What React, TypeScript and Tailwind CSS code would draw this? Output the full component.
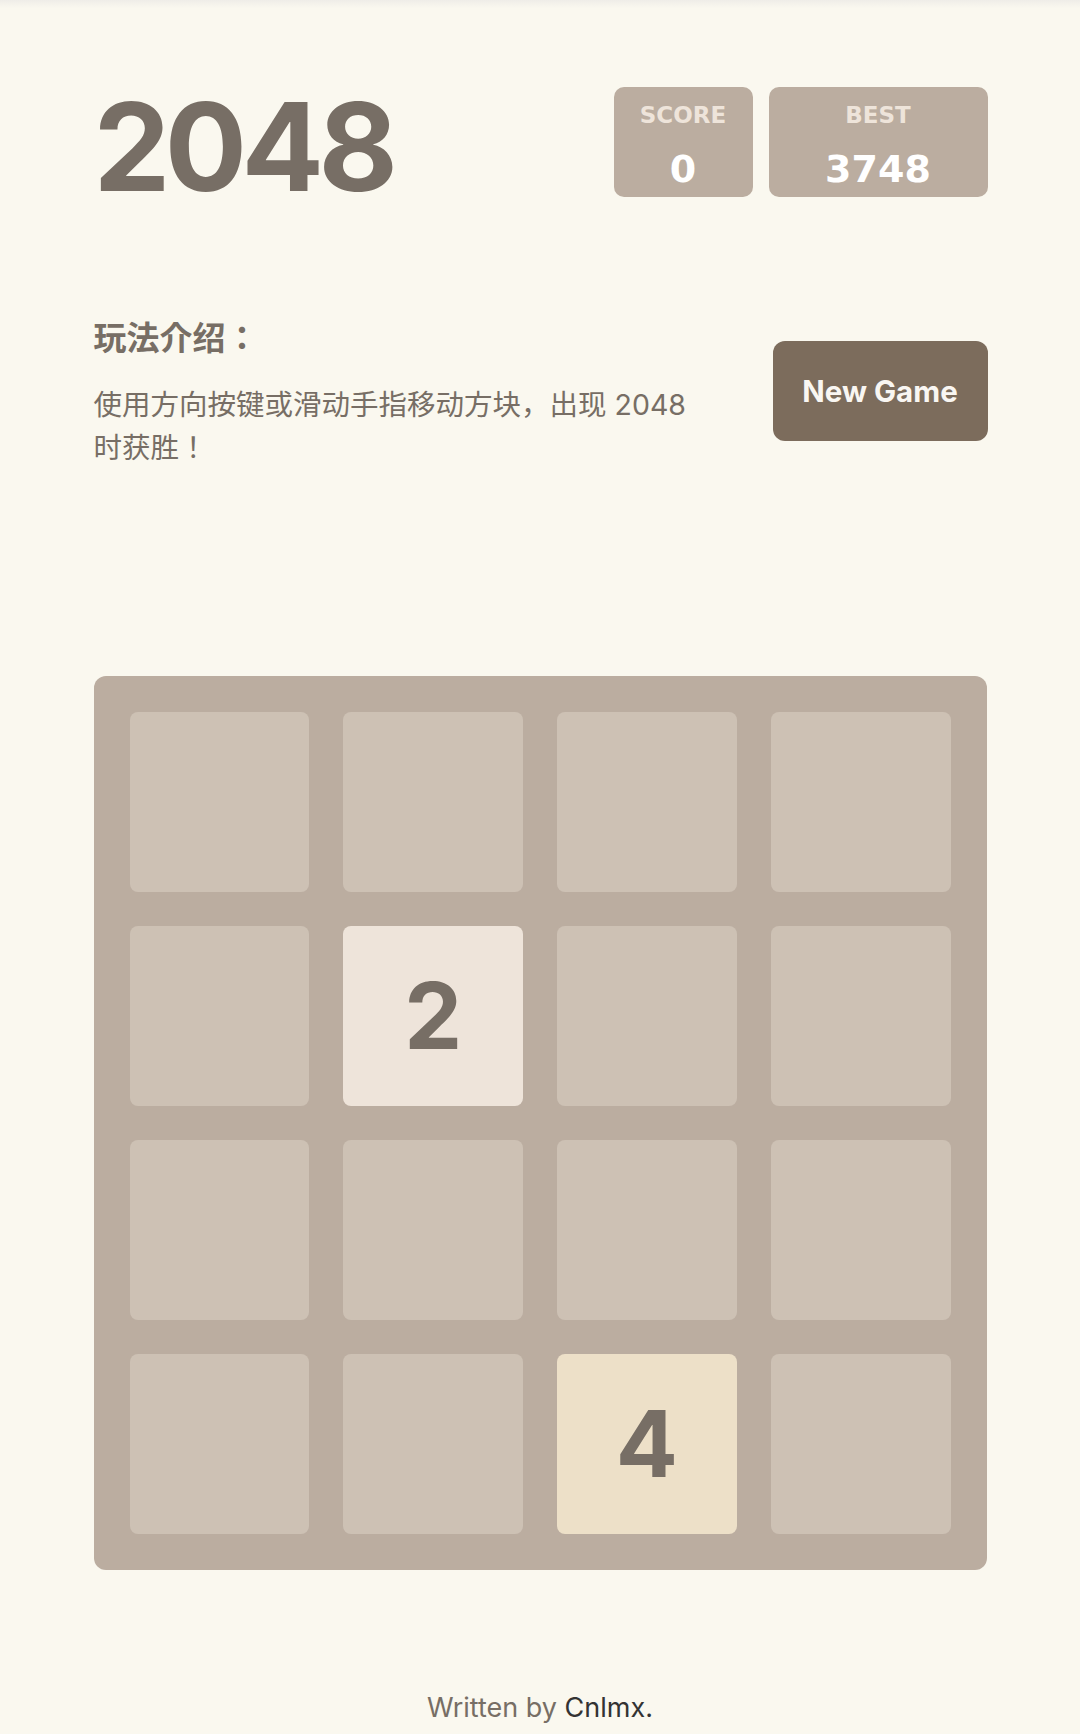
const board = [
  [0, 0, 0, 0],
  [0, 2, 0, 0],
  [0, 0, 0, 0],
  [0, 0, 4, 0],
]

function tileClass(value: number) {
  if (value === 2) return 'bg-[#eee4da]'
  if (value === 4) return 'bg-[#ede0c8]'
  return 'bg-[#cdc1b4]'
}

function ScoreBox({ label, value, width }: { label: string; value: string; width: string }) {
  return (
    <div
      className={`${width} h-[110px] rounded-[10px] bg-[#bbada0] flex flex-col items-center pt-[17px] font-['DejaVu_Sans',sans-serif]`}
    >
      <span className="text-[23px] leading-none font-bold text-[#eee4da]">{label}</span>
      <span className="mt-[23px] text-[38px] leading-none font-bold text-white">{value}</span>
    </div>
  )
}

export default function App() {
  return (
    <div className="min-h-screen bg-[#faf8ef] font-['Inter','Noto_Sans_CJK_JP',sans-serif] text-[#776e65]">
      <div className="h-[8px] bg-gradient-to-b from-[#efede8] to-[#faf8ef]" />

      <div className="mx-auto w-[893px]">
        {/* Header */}
        <div className="flex justify-between items-start pt-[78px]">
          <h1 className="text-[122px] leading-none font-bold tracking-[-5.5px]">2048</h1>
          <div className="flex gap-4 mt-[1px] mr-[-1px]">
            <ScoreBox label="SCORE" value="0" width="w-[139px]" />
            <ScoreBox label="BEST" value="3748" width="w-[219px]" />
          </div>
        </div>

        {/* Intro */}
        <div className="flex justify-between items-start mt-[114px]">
          <div className="w-[600px]">
            <h2 className="text-[33px] leading-none font-bold">玩法介绍：</h2>
            <p className="mt-[29px] text-[28.5px] leading-[1.5]">
              使用方向按键或滑动手指移动方块，出现 2048 时获胜！
            </p>
          </div>
          <button className="mt-[19px] w-[215px] h-[100px] mr-[-1px] rounded-[12px] bg-[#7c6c5c] text-[29.5px] font-bold text-[#f9f6f2]">
            New Game
          </button>
        </div>

        {/* Board */}
        <div className="mt-[206px] rounded-[12px] bg-[#bbada0] p-[36px] grid grid-cols-4 gap-[34px]">
          {board.flat().map((v, i) => (
            <div
              key={i}
              className={`h-[180px] rounded-[8px] flex items-center justify-center ${tileClass(v)}`}
            >
              {v > 0 && <span className="text-[92px] leading-none font-bold text-[#776e65]">{v}</span>}
            </div>
          ))}
        </div>

        {/* Footer */}
        <p className="mt-[124px] text-center text-[27px] leading-none">
          Written by <span className="text-[#333333]">Cnlmx.</span>
        </p>
      </div>
    </div>
  )
}
